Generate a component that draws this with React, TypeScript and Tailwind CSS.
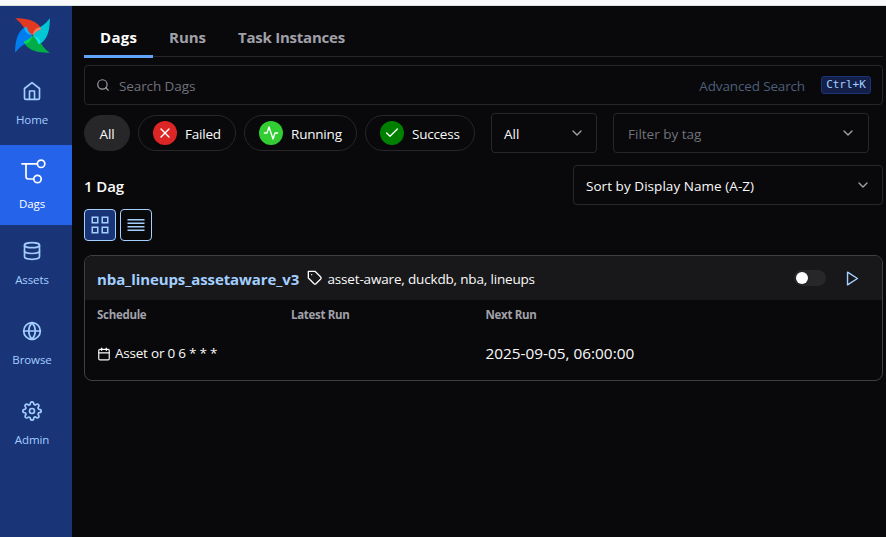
import type { ReactNode } from "react";
import { FiActivity, FiCalendar, FiCheck, FiChevronDown, FiDatabase, FiGlobe, FiHome, FiPlay, FiSearch, FiSettings, FiTag, FiX } from "react-icons/fi";

const DARK = "M-52-52C-26-52-6-49 9-39C16-34 21-30 23-25C12-21 4-12 0 0C-9-3-18-9-23-18C-29-30-36-40-52-52Z";
const LIGHT = "M23-25C26-21 26-18 24-17C14-15 6-7 0 0C3-14 10-24 23-25Z";

function Logo() {
  const blades = [
    { angle: 0, dark: "#e43921", light: "#ff7557" },
    { angle: 90, dark: "#00c7d4", light: "#11e1ee" },
    { angle: 180, dark: "#00ad46", light: "#04d659" },
    { angle: 270, dark: "#017cee", light: "#0cb6ff" },
  ];
  return (
    <svg width="35" height="35" viewBox="-52.5 -52.5 105 105" className="shrink-0">
      {blades.map((b) => (
        <g key={b.angle} transform={`rotate(${b.angle})`}>
          <path d={DARK} fill={b.dark} />
        </g>
      ))}
      {blades.map((b) => (
        <g key={b.angle} transform={`rotate(${b.angle})`}>
          <path d={LIGHT} fill={b.light} />
        </g>
      ))}
      <circle r="2.5" fill="#4a4848" />
    </svg>
  );
}

function DagIcon() {
  return (
    <svg width="28" height="28" viewBox="0 0 28 28" fill="none" stroke="currentColor" strokeWidth="1.7">
      <path d="M3.3 6.8H19.5M8 6.8v12.8a2.4 2.4 0 0 0 2.4 2.4h5.4" />
      <circle cx="23.1" cy="6.8" r="3.7" />
      <circle cx="19.5" cy="22" r="3.7" />
    </svg>
  );
}

function NavItem({ icon, label, active }: { icon: ReactNode; label: ReactNode; active?: boolean }) {
  return (
    <div className={`flex h-20 w-full shrink-0 flex-col items-center pr-2 ${active ? "bg-[#2563eb] text-white" : "text-[#a3cfff]"}`}>
      <div className="flex h-[52px] items-center justify-center">{icon}</div>
      <div className={`text-[11.5px] leading-4 tracking-[-0.1px] whitespace-nowrap ${active ? "-mt-px" : "-mt-[5px]"}`}>{label}</div>
    </div>
  );
}

function Pill({ className, children }: { className: string; children: ReactNode }) {
  return <div className={`flex h-9 shrink-0 items-center rounded-full border border-[#27272a] text-[13.5px] tracking-[-0.2px] whitespace-nowrap ${className}`}>{children}</div>;
}

function Dot({ className, children }: { className: string; children: ReactNode }) {
  return <span className={`mr-2 flex size-6 shrink-0 items-center justify-center rounded-full text-white ${className}`}>{children}</span>;
}

function Select({ className, children }: { className: string; children: ReactNode }) {
  return (
    <div className={`flex h-10 shrink-0 items-center justify-between rounded border border-[#27272a] pl-3 text-[13.5px] whitespace-nowrap ${className}`}>
      {children}
      <FiChevronDown size={16} className="text-[#a1a1aa]" />
    </div>
  );
}

export default function App() {
  return (
    <div className="flex h-[537px] w-[886px] flex-col overflow-hidden bg-[#09090b] font-['Open_Sans','Noto_Sans',sans-serif] text-[#fafafa]">
      <div className="h-1.5 shrink-0 border-b border-[#d9e3e0] bg-[#f8f9fb]" />
      <div className="flex min-h-0 flex-1">
        <nav className="flex w-[72px] shrink-0 flex-col bg-[#1a3478] pt-3">
          <div className="pl-[15px]">
            <Logo />
          </div>
          <div className="mt-3 w-full">
            <NavItem icon={<FiHome size={20} />} label="Home" />
            <NavItem active icon={<DagIcon />} label="Dags" />
            <NavItem icon={<FiDatabase size={20} />} label="Assets" />
            <NavItem icon={<FiGlobe size={20} />} label="Browse" />
            <NavItem icon={<FiSettings size={20} />} label="Admin" />
          </div>
        </nav>

        <main className="flex flex-1 flex-col pr-[3px] pl-3">
          <div className="flex h-[51px] shrink-0 border-b border-[#27272a] text-[15px] font-bold whitespace-nowrap text-[#a1a1aa]">
            <div className="-mb-0.5 h-[52px] w-[69px] border-b-[3px] border-[#60a5fa] pt-5 pl-4 leading-[22px] tracking-[0.3px] text-white">Dags</div>
            <div className="w-[69px] pt-5 pl-4 leading-[22px]">Runs</div>
            <div className="pt-5 pl-4 leading-[22px] tracking-[-0.23px]">Task Instances</div>
          </div>

          <div className="mt-2 flex h-10 shrink-0 items-center rounded border border-[#27272a] pr-[11px] pl-[11px] text-[13.5px] whitespace-nowrap">
            <FiSearch size={14} className="mr-[9px] text-[#a1a1aa]" />
            <span className="flex-1 pt-0.5 tracking-[-0.1px] text-[#71717a]">Search Dags</span>
            <span className="mr-4 pt-0.5 tracking-[-0.15px] text-[#4d5f79]">Advanced Search</span>
            <kbd className="flex h-[18px] w-[50px] items-center justify-center rounded-[3px] border border-[#1a3478] bg-[#14204a] pt-px font-['DejaVu_Sans_Mono',monospace] text-[11px] text-[#a3cfff]">Ctrl+K</kbd>
          </div>

          <div className="mt-2 flex h-10 shrink-0 items-center">
            <Pill className="mr-2 w-[46px] justify-center bg-[#27272a]"><span className="pt-0.5">All</span></Pill>
            <Pill className="mr-2 w-[98px] pl-3.5"><Dot className="bg-[#dc2626]"><FiX size={16} /></Dot><span className="pt-0.5">Failed</span></Pill>
            <Pill className="mr-2 w-[113px] pl-3.5"><Dot className="bg-[#32cd32]"><FiActivity size={16} /></Dot><span className="pt-0.5">Running</span></Pill>
            <Pill className="mr-4 w-[110px] pl-3.5"><Dot className="bg-[#008000]"><FiCheck size={16} /></Dot><span className="pt-0.5">Success</span></Pill>
            <Select className="mr-4 w-[106px] pr-[11px]"><span className="pt-0.5">All</span></Select>
            <Select className="w-64 pr-3"><span className="pt-0.5 pl-0.5 text-[#71717a]">Filter by tag</span></Select>
          </div>

          <div className="mt-3 flex h-10 shrink-0 items-center justify-between">
            <h2 className="pt-0.5 text-[15px] font-semibold tracking-[-0.1px]">1 Dag</h2>
            <Select className="w-[310px] pr-[11px]"><span className="pt-0.5 tracking-[0.05px]">Sort by Display Name (A-Z)</span></Select>
          </div>

          <div className="mt-1 flex gap-1 text-[#a3cfff]">
            <div className="flex size-8 items-center justify-center rounded border border-[#a3cfff] bg-[#1a3478]">
              <svg width="18" height="18" fill="none" stroke="currentColor" strokeWidth="1.5">
                <path d="M1.25 1.25h5.5v5.5h-5.5zM11.25 1.25h5.5v5.5h-5.5zM1.25 11.25h5.5v5.5h-5.5zM11.25 11.25h5.5v5.5h-5.5z" />
              </svg>
            </div>
            <div className="flex size-8 items-center justify-center rounded border border-[#a3cfff]">
              <svg width="18" height="14" stroke="currentColor" strokeWidth="1.5">
                <path d="M.5 1.75h17M.5 5.25h17M.5 8.75h17M.5 12.25h17" />
              </svg>
            </div>
          </div>

          <section className="mt-3.5 h-[126px] shrink-0 overflow-hidden rounded-lg border border-[#3f3f46]">
            <div className="flex h-11 items-center bg-[#18181b] pr-[21px] pl-3 whitespace-nowrap">
              <a className="w-[210px] pt-0.5 text-[15px] font-bold tracking-[-0.1px] text-[#a3cfff]">nba_lineups_assetaware_v3</a>
              <FiTag size={16} className="mr-1" />
              <span className="flex-1 pt-0.5 pl-[0.5px] text-[13.5px] tracking-[-0.17px]">asset-aware, duckdb, nba, lineups</span>
              <span className="mr-[18px] flex h-4 w-8 items-center rounded-full bg-[#27272a] pl-0.5"><i className="size-3 rounded-full bg-white shadow" /></span>
              <FiPlay size={17} className="text-[#a3cfff]" />
            </div>
            <div className="grid grid-cols-[194px_194.5px_1fr] pt-1.5 pl-3 text-[11.5px] leading-[18px] font-bold tracking-[-0.3px] whitespace-nowrap text-[#a1a1aa]">
              <span>Schedule</span>
              <span>Latest Run</span>
              <span>Next Run</span>
            </div>
            <div className="grid h-[58px] grid-cols-[194px_194.5px_1fr] items-center pl-3 whitespace-nowrap">
              <span className="flex items-center text-[13.5px] tracking-[-0.22px]"><FiCalendar size={14} className="mt-0.5 mr-1" />Asset or 0 6 * * *</span>
              <span />
              <span className="pt-0.5 text-[15.35px]">2025-09-05, 06:00:00</span>
            </div>
          </section>
        </main>
      </div>
    </div>
  );
}
